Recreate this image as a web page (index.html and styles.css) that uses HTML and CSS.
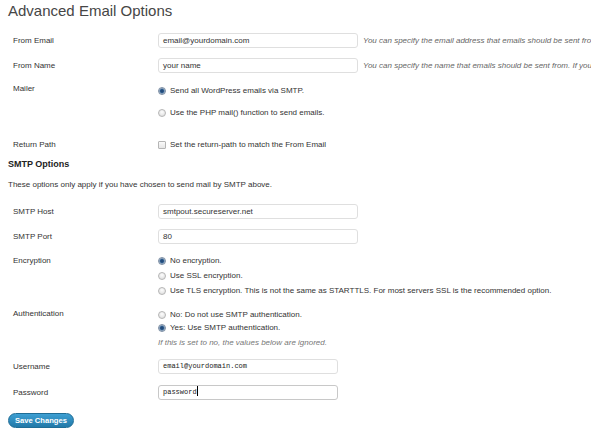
FILE: index.html
```html
<!DOCTYPE html>
<html>
<head>
<meta charset="utf-8">
<title>Advanced Email Options</title>
<link rel="stylesheet" href="styles.css">
</head>
<body>
<div class="wrap">
  <h1>Advanced Email Options</h1>

  <div class="row field-row r-from-email">
    <div class="label">From Email</div>
    <div class="ctrl"><div class="field">email@yourdomain.com</div><span class="desc">You can specify the email address that emails should be sent from. If you leave this blank, the default email will be used.</span></div>
  </div>

  <div class="row field-row r-from-name">
    <div class="label">From Name</div>
    <div class="ctrl"><div class="field">your name</div><span class="desc">You can specify the name that emails should be sent from. If you leave this blank, the emails will be sent from WordPress.</span></div>
  </div>

  <div class="row r-mailer">
    <div class="label">Mailer</div>
    <div class="opts mailer-opts">
      <div class="opt"><span class="radio checked"></span>Send all WordPress emails via SMTP.</div>
      <div class="opt"><span class="radio"></span>Use the PHP mail() function to send emails.</div>
    </div>
  </div>

  <div class="row r-return">
    <div class="label">Return Path</div>
    <div class="opts">
      <div class="opt"><span class="checkbox"></span>Set the return-path to match the From Email</div>
    </div>
  </div>

  <h3 class="section">SMTP Options</h3>
  <p class="intro">These options only apply if you have chosen to send mail by SMTP above.</p>

  <div class="row field-row r-host">
    <div class="label">SMTP Host</div>
    <div class="ctrl"><div class="field">smtpout.secureserver.net</div></div>
  </div>

  <div class="row field-row r-port">
    <div class="label">SMTP Port</div>
    <div class="ctrl"><div class="field">80</div></div>
  </div>

  <div class="row r-enc">
    <div class="label">Encryption</div>
    <div class="opts enc-opts">
      <div class="opt"><span class="radio checked"></span>No encryption.</div>
      <div class="opt"><span class="radio"></span>Use SSL encryption.</div>
      <div class="opt"><span class="radio"></span>Use TLS encryption. This is not the same as STARTTLS. For most servers SSL is the recommended option.</div>
    </div>
  </div>

  <div class="row r-auth">
    <div class="label">Authentication</div>
    <div class="opts auth-opts">
      <div class="opt"><span class="radio"></span>No: Do not use SMTP authentication.</div>
      <div class="opt"><span class="radio checked"></span>Yes: Use SMTP authentication.</div>
      <div class="note">If this is set to no, the values below are ignored.</div>
    </div>
  </div>

  <div class="row field-row r-user">
    <div class="label">Username</div>
    <div class="ctrl"><div class="field short mono">email@yourdomain.com</div></div>
  </div>

  <div class="row field-row r-pass">
    <div class="label">Password</div>
    <div class="ctrl"><div class="field short mono focused">password<span class="caret"></span></div></div>
  </div>

  <div class="submit"><span class="button-primary">Save Changes</span></div>
</div>
</body>
</html>
```

FILE: styles.css
```css
html, body {
  margin: 0;
  padding: 0;
  background: #fff;
  overflow: hidden;
}
body {
  font-family: "Liberation Sans", Arial, sans-serif;
  font-size: 8px;
  color: #333;
}
.wrap {
  padding: 0 8px;
  white-space: nowrap;
}
h1 {
  margin: 0;
  font-size: 15px;
  line-height: 22px;
  font-weight: normal;
  color: #464646;
}
.row {
  display: grid;
  grid-template-columns: 150px minmax(0, 1fr);
}
.row > .label {
  padding-left: 5px;
  line-height: 12px;
}
.field-row {
  align-items: center;
}
.field-row > .label {
  line-height: 15px;
}
.ctrl {
  display: flex;
  align-items: center;
  gap: 5px;
}
.field {
  flex: none;
  width: 200px;
  height: 15px;
  box-sizing: border-box;
  border: 1px solid #dfdfdf;
  border-radius: 3px;
  background: #fff;
  padding-left: 4px;
  line-height: 13px;
  color: #333;
}
.field.short {
  width: 180px;
}
.field.focused {
  border-color: #c8c8c8;
}
.mono {
  font-family: "Liberation Mono", "DejaVu Sans Mono", monospace;
  font-size: 7px;
  color: #222;
}
.caret {
  display: inline-block;
  width: 1px;
  height: 10px;
  background: #000;
  vertical-align: -2px;
}
.desc {
  font-style: italic;
  color: #666;
}
.opt {
  display: flex;
  align-items: center;
  line-height: 12px;
}
.radio {
  flex: none;
  box-sizing: border-box;
  width: 8px;
  height: 8px;
  margin-right: 4px;
  border-radius: 50%;
  border: 1px solid #b5b5b5;
  background: radial-gradient(circle at 50% 35%, #fdfdfd 0, #e4e4e4 70%);
}
.radio.checked {
  border-color: #7d8ea3;
  background: radial-gradient(circle at 50% 50%, #1f3e6a 0, #2b5a8c 1.6px, #9fb3c9 2.8px, #e6ebf1 4px);
}
.checkbox {
  flex: none;
  box-sizing: border-box;
  width: 8px;
  height: 8px;
  margin-right: 4px;
  border: 1px solid #b5b5b5;
  border-radius: 1px;
  background: linear-gradient(#fafafa, #e6e6e6);
}
.note {
  font-style: italic;
  color: #777;
  line-height: 12px;
}

/* vertical rhythm */
.r-from-email { margin-top: 11px; }
.r-from-name { margin-top: 10px; }
.r-mailer { margin-top: 10px; }
.mailer-opts { padding-top: 2px; }
.mailer-opts .opt + .opt { margin-top: 10px; }
.r-return { margin-top: 20px; }
.section {
  margin: 7px 0 0;
  font-size: 9px;
  line-height: 12px;
  font-weight: bold;
  color: #222;
}
.intro {
  margin: 9px 0 0;
  line-height: 12px;
}
.r-host { margin-top: 13px; }
.r-port { margin-top: 10px; }
.r-enc { margin-top: 11px; }
.enc-opts .opt + .opt { margin-top: 3px; }
.r-auth { margin-top: 11px; }
.auth-opts { padding-top: 1px; }
.auth-opts .opt + .opt { margin-top: 1px; }
.auth-opts .note { margin-top: 3px; }
.r-user { margin-top: 10px; }
.r-pass { margin-top: 11px; }
.submit {
  margin-top: 13px;
}
.button-primary {
  display: inline-block;
  height: 15px;
  box-sizing: border-box;
  padding: 0 6px;
  line-height: 13px;
  border-radius: 8px;
  border: 1px solid #1f6d96;
  background: linear-gradient(#3d9fd3, #2279a8);
  color: #fff;
  font-weight: bold;
  font-size: 7.6px;
}
```
